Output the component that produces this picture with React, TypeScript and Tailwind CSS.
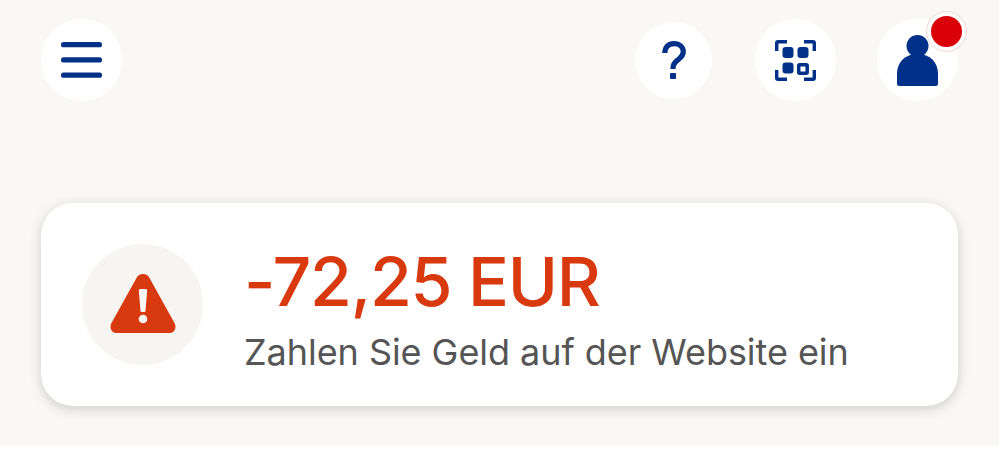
export default function App() {
  const font = { fontFamily: 'Inter, "Liberation Sans", sans-serif' };
  return (
    <div className="w-[999px] h-[459px] overflow-hidden bg-white" style={font}>
      <div className="h-[446px] bg-[#f9f8f5] px-[41px] pt-[19px]">
        <header className="flex items-center h-[82px]">
          <button className="w-[81px] h-[82px] rounded-full bg-white flex items-center justify-center">
            <svg width="41" height="36" viewBox="0 0 41 36" fill="#003087">
              <rect x="0" y="0" width="41" height="5.300" rx="2.600" />
              <rect x="0" y="15.300" width="41" height="5.300" rx="2.600" />
              <rect x="0" y="30.500" width="41" height="5.300" rx="2.600" />
            </svg>
          </button>
          <div className="flex-1" />
          <button className="w-[77px] h-[77px] rounded-full bg-white flex items-center justify-center">
            <svg width="24" height="38" viewBox="0 0 24 38" fill="none" className="mb-[1px]">
              <path d="M2.800 12C2.800 6 6.500 2.600 12 2.600s9.300 3.300 9.300 8.200c0 4-2.300 5.700-4.700 7.500-2.800 2.100-5.600 3.700-5.600 8.700v1" stroke="#003087" strokeWidth="5.200" />
              <rect x="8" y="32" width="6" height="6" rx="1" fill="#003087" />
            </svg>
          </button>
          <button className="ml-[43px] w-[81px] h-[82px] rounded-full bg-white flex items-center justify-center">
            <svg width="41" height="41" viewBox="0 0 41 41" fill="#003087">
              <path d="M0 11V3a3 3 0 0 1 3-3h9v3.400H3.400V11z" />
              <path d="M41 11V3a3 3 0 0 0-3-3h-9v3.400h8.600V11z" />
              <path d="M0 30v8a3 3 0 0 0 3 3h9v-3.400H3.400V30z" />
              <path d="M41 30v8a3 3 0 0 1-3 3h-9v-3.400h8.600V30z" />
              <rect x="7.500" y="7" width="11" height="11" rx="3" />
              <rect x="22.500" y="7" width="11" height="11" rx="3" />
              <rect x="7.500" y="22.500" width="11" height="11" rx="3" />
              <rect x="23.700" y="24.700" width="8.500" height="8.500" rx="1" fill="none" stroke="#003087" strokeWidth="3.500" />
            </svg>
          </button>
          <div className="relative ml-[41px] w-[81px] h-[82px] rounded-full bg-white flex items-center justify-center">
            <svg width="41" height="51" viewBox="0 0 41 51" fill="#003087" className="mt-[1px]">
              <circle cx="20.500" cy="11" r="11" />
              <path d="M0 48.500V39C0 27 8 19 20.500 19S41 27 41 39v9.500a2.500 2.500 0 0 1-2.500 2.500h-36A2.500 2.500 0 0 1 0 48.500z" />
            </svg>
            <span className="absolute left-[49px] top-[-8px] w-[41px] h-[41px] rounded-full bg-[#fdfcfb] border border-[#f0d8d8] flex items-center justify-center">
              <span className="block w-[31px] h-[31px] rounded-full bg-[#d90008]" />
            </span>
          </div>
        </header>
        <section className="mt-[102px] h-[203px] rounded-[32px] bg-white shadow-[0_3px_12px_rgba(60,50,40,0.22)] flex items-center pl-[41px]">
          <div className="w-[121px] h-[121px] rounded-full bg-[#f7f5f2] flex items-center justify-center">
            <svg width="66" height="60" viewBox="0 0 66 60" className="mb-[1px]">
              <path d="M33 0c3 0 5 1.500 6.500 4l25 45c2.500 4.500 0 10-5 10H6.500c-5 0-7.500-5.500-5-10l25-45C28 1.500 30 0 33 0z" fill="#d9390f" />
              <path d="M28.800 16.500a1.500 1.500 0 0 1 1.500-1.500h5.400a1.500 1.500 0 0 1 1.500 1.500L35.500 37a1 1 0 0 1-1 1h-3a1 1 0 0 1-1-1z" fill="#f8f7f4" />
              <circle cx="33" cy="45" r="4.300" fill="#f8f7f4" />
            </svg>
          </div>
          <div className="ml-[41px] flex flex-col mt-[7px]">
            <div className="text-[68px] leading-[78px] font-[450] text-[#d9390f] tracking-[-1.300px]">-72,25 EUR</div>
            <div className="text-[36px] leading-[44px] font-[420] text-[#555555] mt-[10px] tracking-[-0.050px]">Zahlen Sie Geld auf der Website ein</div>
          </div>
        </section>
      </div>
    </div>
  );
}
